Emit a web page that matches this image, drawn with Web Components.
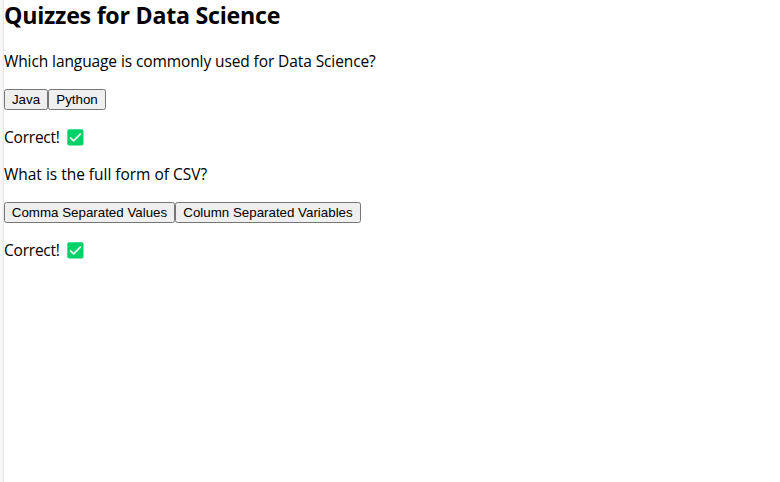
<!DOCTYPE html>
<html lang="en">
<head>
<meta charset="utf-8">
<title>Quizzes for Data Science</title>
<style>
html, body { margin: 0; height: 100%; background: #fff; overflow: hidden; }
</style>
</head>
<body>
<quiz-page>
  <quiz-heading>Quizzes for Data Science</quiz-heading>
  <quiz-question>
    <span slot="question" style="letter-spacing:-.1px">Which language is commonly used for Data Science?</span>
    <quiz-option style="width:44px">Java</quiz-option>
    <quiz-option style="width:58px">Python</quiz-option>
    <span slot="result">Correct!</span>
  </quiz-question>
  <quiz-question>
    <span slot="question" style="letter-spacing:-.02px">What is the full form of CSV?</span>
    <quiz-option style="width:171px">Comma Separated Values</quiz-option>
    <quiz-option style="width:186px">Column Separated Variables</quiz-option>
    <span slot="result">Correct!</span>
  </quiz-question>
</quiz-page>
<script>
const define = (name, html) => customElements.define(name, class extends HTMLElement {
  constructor() {
    super();
    this.attachShadow({ mode: 'open' }).innerHTML = html;
  }
});

define('check-mark', `
  <style>:host { display: block; width: 17px; height: 17px; } svg { display: block; }</style>
  <svg width="17" height="17" viewBox="0 0 17 17">
    <rect x=".3" y=".3" width="16.2" height="16.2" rx="1.8" fill="#00d26a"/>
    <path d="M3.6 8.8 6.6 11.8 13.3 5.2" fill="none" stroke="#f4f4f4" stroke-width="1.7" stroke-linecap="round" stroke-linejoin="round"/>
  </svg>`);

define('quiz-option', `
  <style>
    :host { display: block; height: 21px; }
    button { display: block; width: 100%; height: 21px; margin: 0; padding: 0; box-sizing: border-box;
      border: 1px solid #767676; border-radius: 2.5px; background: #efefef; color: #000;
      font: 13.333px/19px "Liberation Sans", Arial, sans-serif; white-space: nowrap; }
  </style>
  <button type="button"><slot></slot></button>`);

define('quiz-heading', `
  <style>
    :host { display: block; }
    h2 { margin: 0; font-size: 23.2px; line-height: 30px; font-weight: 700; letter-spacing: -.25px; white-space: nowrap; }
  </style>
  <h2><slot></slot></h2>`);

define('quiz-question', `
  <style>
    :host { display: block; height: 113px; }
    p { margin: 0; height: 21px; line-height: 21px; font-size: 15.5px; white-space: nowrap; }
    .options { display: flex; margin: 17px 0; }
    .result { display: flex; align-items: center; gap: 7px; letter-spacing: -.22px; }
  </style>
  <p><slot name="question"></slot></p>
  <div class="options"><slot></slot></div>
  <p class="result"><slot name="result"></slot><check-mark></check-mark></p>`);

define('quiz-page', `
  <style>
    :host { display: grid; grid-template-columns: 4px 1fr; height: 100%;
      font-family: "Open Sans", "Noto Sans", sans-serif; color: #000; }
    aside { background: linear-gradient(to right, #f8f8f8 0 2px, #f3f3f3 2px 3px, #e8e8e8 3px); }
    main { display: flex; flex-direction: column; }
    ::slotted(quiz-heading) { margin-bottom: 21px; }
  </style>
  <aside></aside>
  <main><slot></slot></main>`);
</script>
</body>
</html>
